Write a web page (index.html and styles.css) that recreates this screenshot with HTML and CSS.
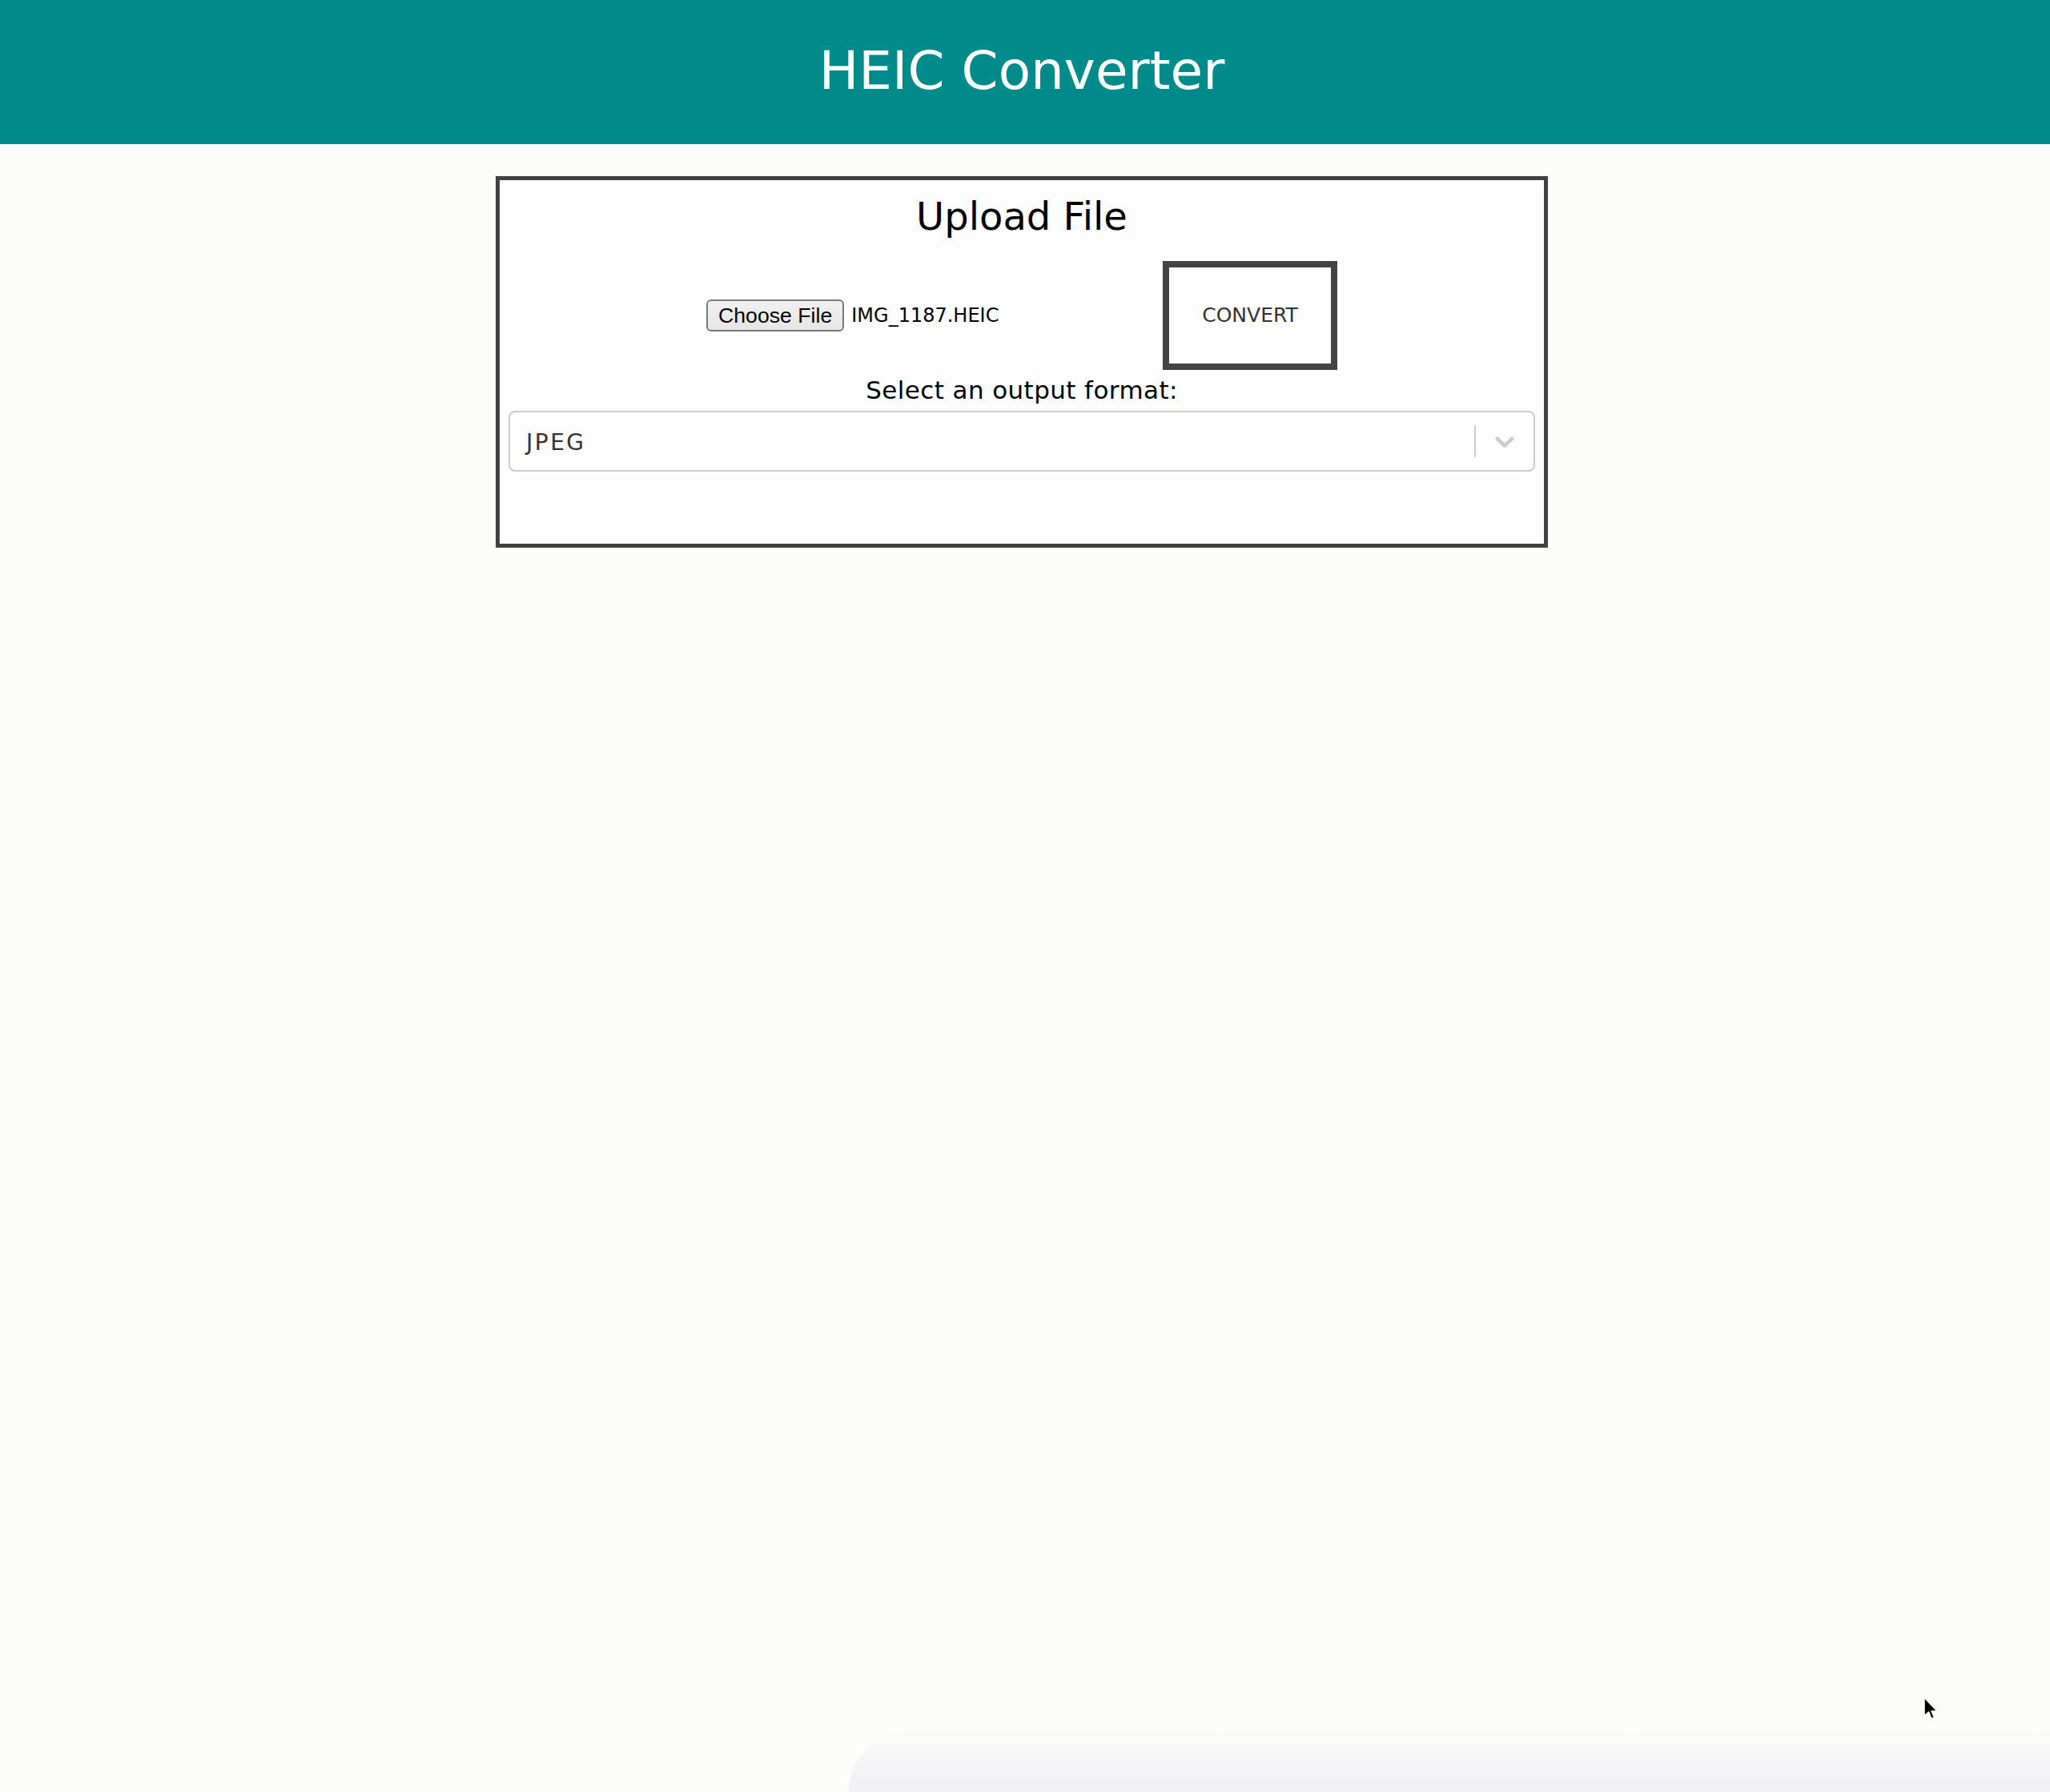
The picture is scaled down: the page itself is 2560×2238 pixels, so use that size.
FILE: index.html
```html
<!DOCTYPE html>
<html lang="en">
<head>
<meta charset="utf-8">
<title>HEIC Converter</title>
<link rel="stylesheet" href="styles.css">
</head>
<body>
<header class="topbar">
  <h1 class="app-title">HEIC Converter</h1>
</header>
<main class="page">
  <section class="card">
    <h2 class="card-title">Upload File</h2>
    <div class="upload-row">
      <div class="file-input">
        <span class="file-button">Choose File</span>
        <span class="file-name">IMG_1187.HEIC</span>
      </div>
      <button class="convert-btn" type="button">CONVERT</button>
    </div>
    <label class="format-label">Select an output format:</label>
    <div class="select-control">
      <div class="select-value">JPEG</div>
      <div class="select-indicators">
        <span class="select-separator"></span>
        <span class="select-arrow">
          <svg viewBox="0 0 20 20" width="40" height="40" aria-hidden="true"><path fill="currentColor" d="M4.516 7.548c0.436-0.446 1.043-0.481 1.576 0l3.908 3.747 3.908-3.747c0.533-0.481 1.141-0.446 1.574 0 0.436 0.445 0.408 1.197 0 1.615-0.406 0.418-4.695 4.502-4.695 4.502-0.217 0.223-0.502 0.335-0.787 0.335s-0.57-0.112-0.789-0.335c0 0-4.287-4.084-4.695-4.502s-0.436-1.17 0-1.615z"/></svg>
        </span>
      </div>
    </div>
  </section>
</main>
<div class="bottom-fade"></div>
<svg class="cursor" viewBox="0 0 20 30" width="20" height="30" aria-hidden="true"><path d="M2 1 L2 24 L7.5 19 L11 27.5 L14.5 26 L11 18 L18 18 Z" fill="#000" stroke="#fff" stroke-width="1.5" stroke-linejoin="round"/></svg>
</body>
</html>
```
FILE: styles.css
```css
html, body {
  margin: 0;
  padding: 0;
}
body {
  background: #fcfcfb;
  font-family: "DejaVu Sans", "Noto Sans", sans-serif;
  color: #000;
  min-height: 2238px;
  position: relative;
  overflow: hidden;
}
.topbar {
  box-sizing: border-box;
  height: 180px;
  padding: 56px 8px 0 0;
  background: #008b8b;
  text-align: center;
}
.app-title {
  margin: 0;
  font-weight: normal;
  font-size: 66px;
  line-height: 66px;
  color: #ffffff;
}
.page {
  padding-right: 8px;
}
.card {
  box-sizing: border-box;
  width: 1314px;
  margin: 40px auto 0;
  border: 5px solid #424242;
  background: #fdfdfd;
  padding: 0 11px 90px;
}
.card-title {
  margin: 15px 0 0;
  text-align: center;
  font-weight: normal;
  font-size: 48px;
  line-height: 60px;
  color: #000;
}
.upload-row {
  margin-top: 26px;
  display: flex;
  justify-content: center;
  align-items: center;
}
.file-input {
  width: 570px;
  display: flex;
  align-items: center;
}
.file-button {
  box-sizing: border-box;
  height: 40px;
  padding: 0 13px;
  display: flex;
  align-items: center;
  border: 2px solid #7a7a7a;
  border-radius: 6px;
  background: linear-gradient(#f0f0f0, #e6e6e6);
  font-family: "Liberation Sans", Arial, sans-serif;
  font-size: 26.67px;
  color: #000;
}
.file-name {
  margin-left: 9px;
  font-size: 24px;
  color: #000;
}
.convert-btn {
  box-sizing: border-box;
  width: 218px;
  padding: 40px 0;
  border: 8px solid #434343;
  background: #fdfdfd;
  font-family: "DejaVu Sans", sans-serif;
  font-size: 25px;
  line-height: 40px;
  color: #333;
  text-align: center;
}
.format-label {
  display: block;
  margin-top: 5px;
  text-align: center;
  font-size: 31px;
  letter-spacing: 0.4px;
  line-height: 40px;
  color: #000;
}
.select-control {
  box-sizing: border-box;
  margin-top: 6px;
  height: 76px;
  display: flex;
  align-items: center;
  border: 2px solid #cccccc;
  border-radius: 8px;
  background: #fdfdfd;
}
.select-value {
  flex: 1;
  padding: 4px 0 0 20px;
  font-size: 28px;
  letter-spacing: 2.5px;
  line-height: 40px;
  color: #333;
}
.select-indicators {
  align-self: stretch;
  display: flex;
  align-items: center;
}
.select-separator {
  align-self: stretch;
  width: 2px;
  margin: 16px 0;
  background: #cccccc;
}
.select-arrow {
  display: flex;
  padding: 16px;
  color: #cccccc;
}
.bottom-fade {
  position: absolute;
  left: 1060px;
  right: 0;
  bottom: 0;
  height: 80px;
  border-top-left-radius: 80px;
  background: linear-gradient(to bottom, rgba(236, 236, 242, 0), rgba(226, 226, 238, 0.45));
  pointer-events: none;
}
.cursor {
  position: absolute;
  left: 2401px;
  top: 2119px;
}
```
